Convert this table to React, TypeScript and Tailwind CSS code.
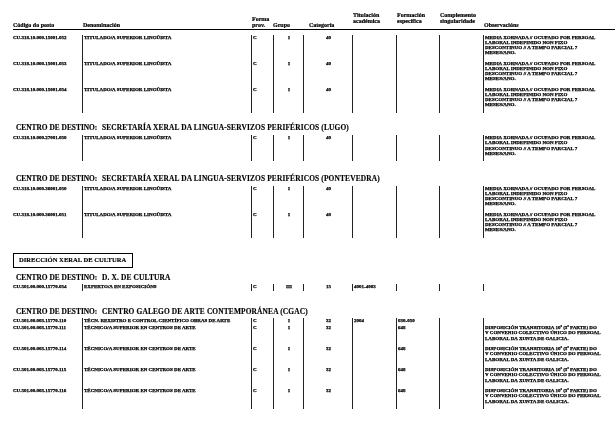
import React from "react";

const GRID = "grid grid-cols-[69px_169px_22px_30px_49px_44px_43px_44px_119px]";
const CELL = "border-l border-[#222] pl-[1px] whitespace-nowrap";

type Row = {
  code: string;
  den: string;
  forma: string;
  grupo: string;
  cat: string;
  tit?: string;
  form?: string;
  comp?: string;
  obs?: string[];
  h: string;
};

const OBS_A = [
  "MEDIA XORNADA // OCUPADO POR PERSOAL",
  "LABORAL INDEFINIDO NON FIXO",
  "DESCONTINUO // A TEMPO PARCIAL 7",
  "MESES/ANO.",
];
const OBS_B = [
  "DISPOSICIÓN TRANSITORIA 10ª (3ª PARTE) DO",
  "V CONVENIO COLECTIVO ÚNICO DO PERSOAL",
  "LABORAL DA XUNTA DE GALICIA.",
];

const TIT = "TITULADO/A SUPERIOR LINGÜISTA";
const TEC = "TÉCNICO/A SUPERIOR EN CENTROS DE ARTE";

function DataRow({ r }: { r: Row }) {
  return (
    <div className={`${GRID} ${r.h} text-[5px] leading-[5.3px] [-webkit-text-stroke:0.25px_#000]`}>
      <div className="whitespace-nowrap">{r.code}</div>
      <div className={CELL}>{r.den}</div>
      <div className={CELL}>{r.forma}</div>
      <div className={`${CELL} text-center`}>{r.grupo}</div>
      <div className={`${CELL} text-center`}>{r.cat}</div>
      <div className={CELL}>{r.tit ?? ""}</div>
      <div className={CELL}>{r.form ?? ""}</div>
      <div className={CELL}>{r.comp ?? ""}</div>
      <div className={CELL}>
        {(r.obs ?? []).map((l, i) => (
          <div key={i}>{l}</div>
        ))}
      </div>
    </div>
  );
}

function Heading({ name, mt }: { name: string; mt: string }) {
  return (
    <div className={`${mt} flex h-[8px] items-center pl-[3px] text-[7.4px] leading-[8px] whitespace-nowrap [-webkit-text-stroke:0.15px_#000]`}>
      <span className="w-[86px] shrink-0">CENTRO DE DESTINO:</span>
      <span className="tracking-[0.15px]">{name}</span>
    </div>
  );
}

export default function App() {
  const lingua = (n: string): Row => ({
    code: n,
    den: TIT,
    forma: "C",
    grupo: "I",
    cat: "40",
    obs: OBS_A,
    h: "h-[26px]",
  });
  const cgac = (n: string): Row => ({
    code: n,
    den: TEC,
    forma: "C",
    grupo: "I",
    cat: "32",
    form: "648",
    obs: OBS_B,
    h: "h-[21px]",
  });

  return (
    <div className="w-[615px] h-[439px] overflow-hidden bg-white">
      <div
        className="h-full w-full text-black font-bold pl-[13px] pt-[11.5px] [will-change:transform]"
        style={{ fontFamily: '"Liberation Serif", "Times New Roman", serif' }}
      >
        {/* header */}
        <div className={`${GRID} items-end border-b border-black text-[6px] leading-[6px] whitespace-nowrap [-webkit-text-stroke:0.2px_#000]`}>
          <div className="pb-[1px]">Código do posto</div>
          <div className="pb-[1px] pl-[1px]">Denominación</div>
          <div className="pb-[1px] pl-[1px]">
            <div>Forma</div>
            <div>prov.</div>
          </div>
          <div className="pb-[1px]">Grupo</div>
          <div className="pb-[1px] pl-[6px]">Categoría</div>
          <div className="pb-[5px] pl-[1px]">
            <div>Titulación</div>
            <div>académica</div>
          </div>
          <div className="pb-[5px] pl-[1px]">
            <div>Formación</div>
            <div>específica</div>
          </div>
          <div className="pb-[5px] pl-[1px]">
            <div>Complemento</div>
            <div>singularidade</div>
          </div>
          <div className="pb-[1px] pl-[1px]">Observacións</div>
        </div>

        <div className="mt-[5px]">
          <DataRow r={lingua("CU.318.10.000.15001.052")} />
          <DataRow r={lingua("CU.318.10.000.15001.053")} />
          <DataRow r={lingua("CU.318.10.000.15001.054")} />
        </div>

        <Heading mt="mt-[11.5px]" name="SECRETARÍA XERAL DA LINGUA-SERVIZOS PERIFÉRICOS (LUGO)" />
        <div className="mt-[3px]">
          <DataRow r={lingua("CU.318.10.000.27001.050")} />
        </div>

        <Heading mt="mt-[13.5px]" name="SECRETARÍA XERAL DA LINGUA-SERVIZOS PERIFÉRICOS (PONTEVEDRA)" />
        <div className="mt-[3px]">
          <DataRow r={lingua("CU.318.10.000.36001.050")} />
          <DataRow r={lingua("CU.318.10.000.36001.051")} />
        </div>

        <div className="mt-[15px] flex h-[15px] w-[120px] items-center border border-black pl-[5px] text-[6.6px] whitespace-nowrap [-webkit-text-stroke:0.15px_#000]">
          DIRECCIÓN XERAL DE CULTURA
        </div>

        <Heading mt="mt-[6px]" name="D. X. DE CULTURA" />
        <div className="mt-[2.5px]">
          <DataRow
            r={{
              code: "CU.501.00.000.15770.054",
              den: "EXPERTO/A EN EXPOSICIÓNS",
              forma: "C",
              grupo: "III",
              cat: "15",
              tit: "4001-4003",
              h: "h-[7px]",
            }}
          />
        </div>

        <Heading mt="mt-[16.5px]" name="CENTRO GALEGO DE ARTE CONTEMPORÁNEA (CGAC)" />
        <div className="mt-[2.5px]">
          <DataRow
            r={{
              code: "CU.501.00.003.15770.110",
              den: "TÉCN. REXISTRO E CONTROL CIENTÍFICO OBRAS DE ARTE",
              forma: "C",
              grupo: "I",
              cat: "32",
              tit: "2004",
              form: "030-050",
              h: "h-[7px]",
            }}
          />
          <DataRow r={cgac("CU.501.00.003.15770.111")} />
          <DataRow r={cgac("CU.501.00.003.15770.114")} />
          <DataRow r={cgac("CU.501.00.003.15770.115")} />
          <DataRow r={cgac("CU.501.00.003.15770.116")} />
        </div>
      </div>
    </div>
  );
}
